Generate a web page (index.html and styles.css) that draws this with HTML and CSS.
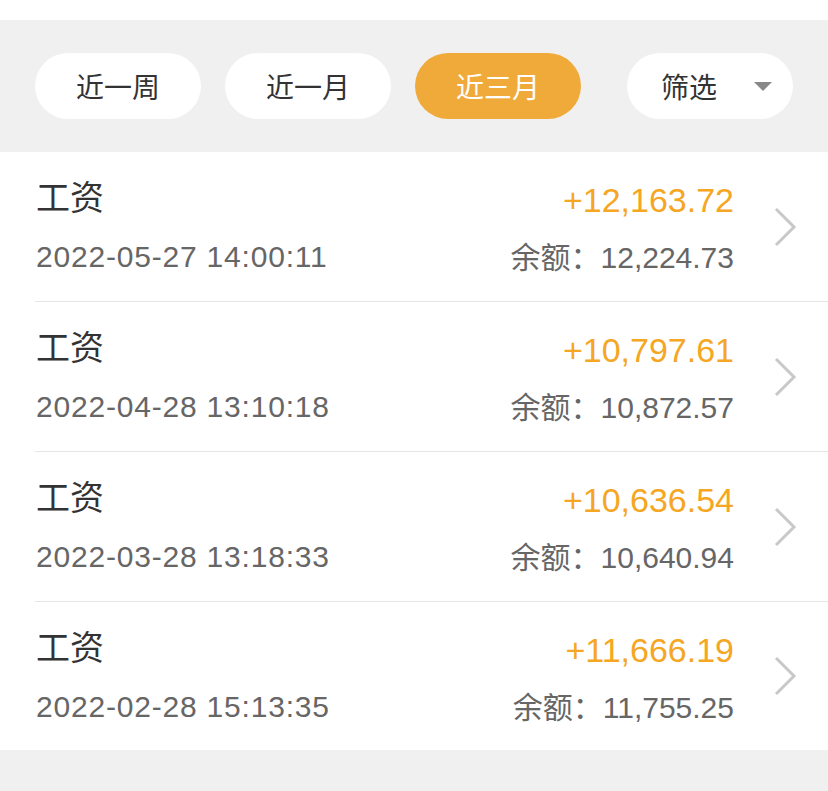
FILE: index.html
```html
<!DOCTYPE html>
<html lang="zh-CN">
<head>
    <meta charset="UTF-8">
    <meta name="viewport" content="width=device-width, initial-scale=1.0">
    <title>收支明细</title>
    <link rel="stylesheet" href="styles.css">
</head>
<body>
    <div class="topo"></div>

    <div class="filtros">
        <button class="pilula">近一周</button>
        <button class="pilula">近一月</button>
        <button class="pilula ativa">近三月</button>
        <button class="pilula filtro">筛选 <span class="seta"></span></button>
    </div>

    <ul class="lista">
        <li class="item">
            <div class="esq">
                <div class="titulo">工资</div>
                <div class="data">2022-05-27 14:00:11</div>
            </div>
            <div class="dir">
                <div class="valor">+12,163.72</div>
                <div class="saldo">余额：12,224.73</div>
            </div>
            <svg class="chevron" width="24" height="40" viewBox="0 0 24 40"><path d="M2 2 L20 20 L2 38" fill="none" stroke="#c8c8c8" stroke-width="3"/></svg>
        </li>
        <li class="item">
            <div class="esq">
                <div class="titulo">工资</div>
                <div class="data">2022-04-28 13:10:18</div>
            </div>
            <div class="dir">
                <div class="valor">+10,797.61</div>
                <div class="saldo">余额：10,872.57</div>
            </div>
            <svg class="chevron" width="24" height="40" viewBox="0 0 24 40"><path d="M2 2 L20 20 L2 38" fill="none" stroke="#c8c8c8" stroke-width="3"/></svg>
        </li>
        <li class="item">
            <div class="esq">
                <div class="titulo">工资</div>
                <div class="data">2022-03-28 13:18:33</div>
            </div>
            <div class="dir">
                <div class="valor">+10,636.54</div>
                <div class="saldo">余额：10,640.94</div>
            </div>
            <svg class="chevron" width="24" height="40" viewBox="0 0 24 40"><path d="M2 2 L20 20 L2 38" fill="none" stroke="#c8c8c8" stroke-width="3"/></svg>
        </li>
        <li class="item">
            <div class="esq">
                <div class="titulo">工资</div>
                <div class="data">2022-02-28 15:13:35</div>
            </div>
            <div class="dir">
                <div class="valor">+11,666.19</div>
                <div class="saldo">余额：11,755.25</div>
            </div>
            <svg class="chevron" width="24" height="40" viewBox="0 0 24 40"><path d="M2 2 L20 20 L2 38" fill="none" stroke="#c8c8c8" stroke-width="3"/></svg>
        </li>
    </ul>
</body>
</html>
```

FILE: styles.css
```css
body {
    font-family: "Liberation Sans", "Noto Sans CJK SC", sans-serif;
    background-color: #f0f0f0;
    margin: 0;
    padding: 0;
}

.topo {
    height: 20px;
    background-color: #fff;
}

/* barra de filtros */
.filtros {
    display: flex;
    align-items: center;
    height: 132px;
    padding-left: 35px;
}

.pilula {
    width: 166px;
    height: 66px;
    border: none;
    border-radius: 33px;
    background-color: #fff;
    color: #333;
    font-family: "Noto Sans CJK SC", sans-serif;
    font-size: 28px;
    margin-right: 24px;
    padding: 0;
}

.ativa {
    background-color: #f0aa3a;
    color: #fff;
}

.filtro {
    margin-left: 22px;
    margin-right: 0;
    display: flex;
    align-items: center;
    padding-left: 34px;
}

.seta {
    width: 0;
    height: 0;
    border-left: 9px solid transparent;
    border-right: 9px solid transparent;
    border-top: 9px solid #888;
    margin-left: 37px;
}

/* lista */
.lista {
    list-style: none;
    margin: 0;
    padding: 0;
    background-color: #fff;
}

.item {
    display: flex;
    align-items: flex-start;
    height: 127px;
    padding-top: 22px;
    margin-left: 35px;
    border-bottom: 1px solid #e6e6e6;
}

.item:last-child {
    border-bottom: none;
    height: 126px;
}

.esq {
    flex: 1;
    padding-left: 1px;
}

.titulo {
    font-family: "Noto Sans CJK SC", sans-serif;
    font-size: 34px;
    line-height: 40px;
    color: #333;
    margin-top: 2px;
}

.data {
    font-size: 30px;
    line-height: 36px;
    letter-spacing: 0.8px;
    color: #666;
    margin-top: 23px;
}

.dir {
    text-align: right;
}

.valor {
    font-size: 34px;
    line-height: 40px;
    color: #f5a623;
    margin-top: 6px;
}

.saldo {
    font-size: 30px;
    line-height: 36px;
    color: #666;
    margin-top: 20px;
}

.chevron {
    align-self: center;
    margin-top: -22px;
    margin-left: 40px;
    margin-right: 30px;
}
```
